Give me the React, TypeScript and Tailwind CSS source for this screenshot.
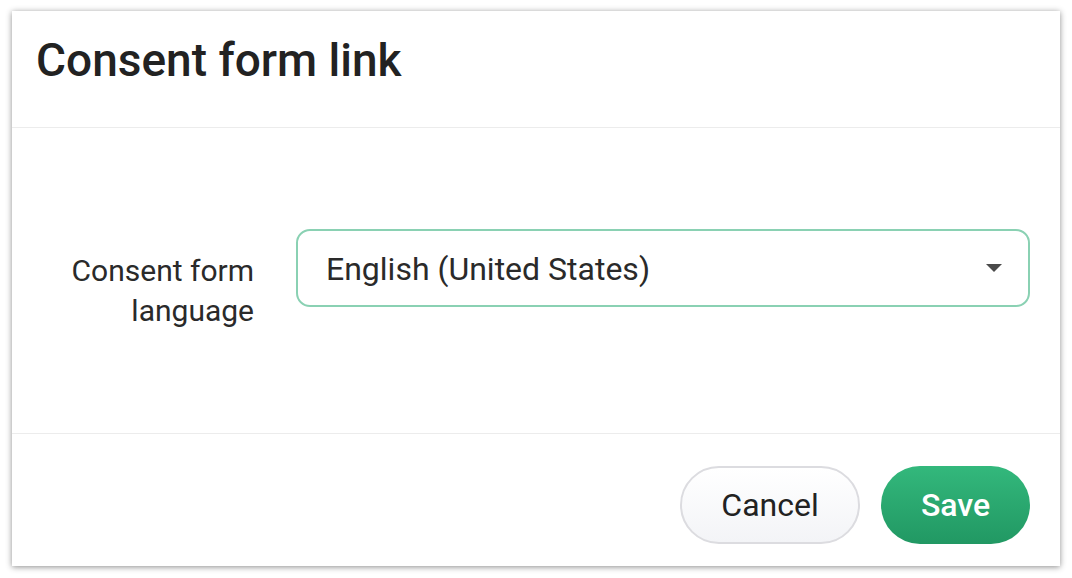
export default function App() {
  return (
    <div className="w-[1072px] h-[578px] bg-white pt-[11px] pl-[12px]" style={{ fontFamily: "Roboto, 'Noto Sans', sans-serif" }}>
      <div className="w-[1048px] h-[555px] bg-white flex flex-col shadow-[0_1px_6px_rgba(0,0,0,0.45)]">
        <div className="h-[117px] border-b border-[#ececec] pl-6 pt-[22px]">
          <h1 className="text-[46px] leading-[54px] font-medium text-[#222222]">Consent form link</h1>
        </div>
        <div className="h-[306px] flex items-start pt-[101px] border-b border-[#ececec]">
          <label className="w-[242px] pt-[22px] text-right text-[30px] leading-[40px] text-[#2a2a2a]">
            Consent form
            <br />
            language
          </label>
          <div className="ml-[42px] w-[734px] h-[78px] rounded-[14px] border-2 border-[#8ad1b3] flex items-center justify-between pl-[28px] pr-[26px]">
            <span className="text-[32px] text-[#2a2a2a] translate-y-[1px]">English (United States)</span>
            <svg width="16" height="9" viewBox="0 0 16 9">
              <path d="M0 0 L16 0 L8 8 Z" fill="#4a4a4a" />
            </svg>
          </div>
        </div>
        <div className="flex-1 flex justify-end items-start pt-[32px] pr-[30px] gap-[21px]">
          <button className="w-[180px] h-[78px] rounded-full border-2 border-[#dcdce0] bg-gradient-to-b from-white to-[#f3f4f7] text-[32px] text-[#222222]">
            Cancel
          </button>
          <button className="w-[149px] h-[78px] rounded-full bg-gradient-to-b from-[#33b87c] to-[#219863] text-[32px] font-medium text-white">
            Save
          </button>
        </div>
      </div>
    </div>
  );
}
